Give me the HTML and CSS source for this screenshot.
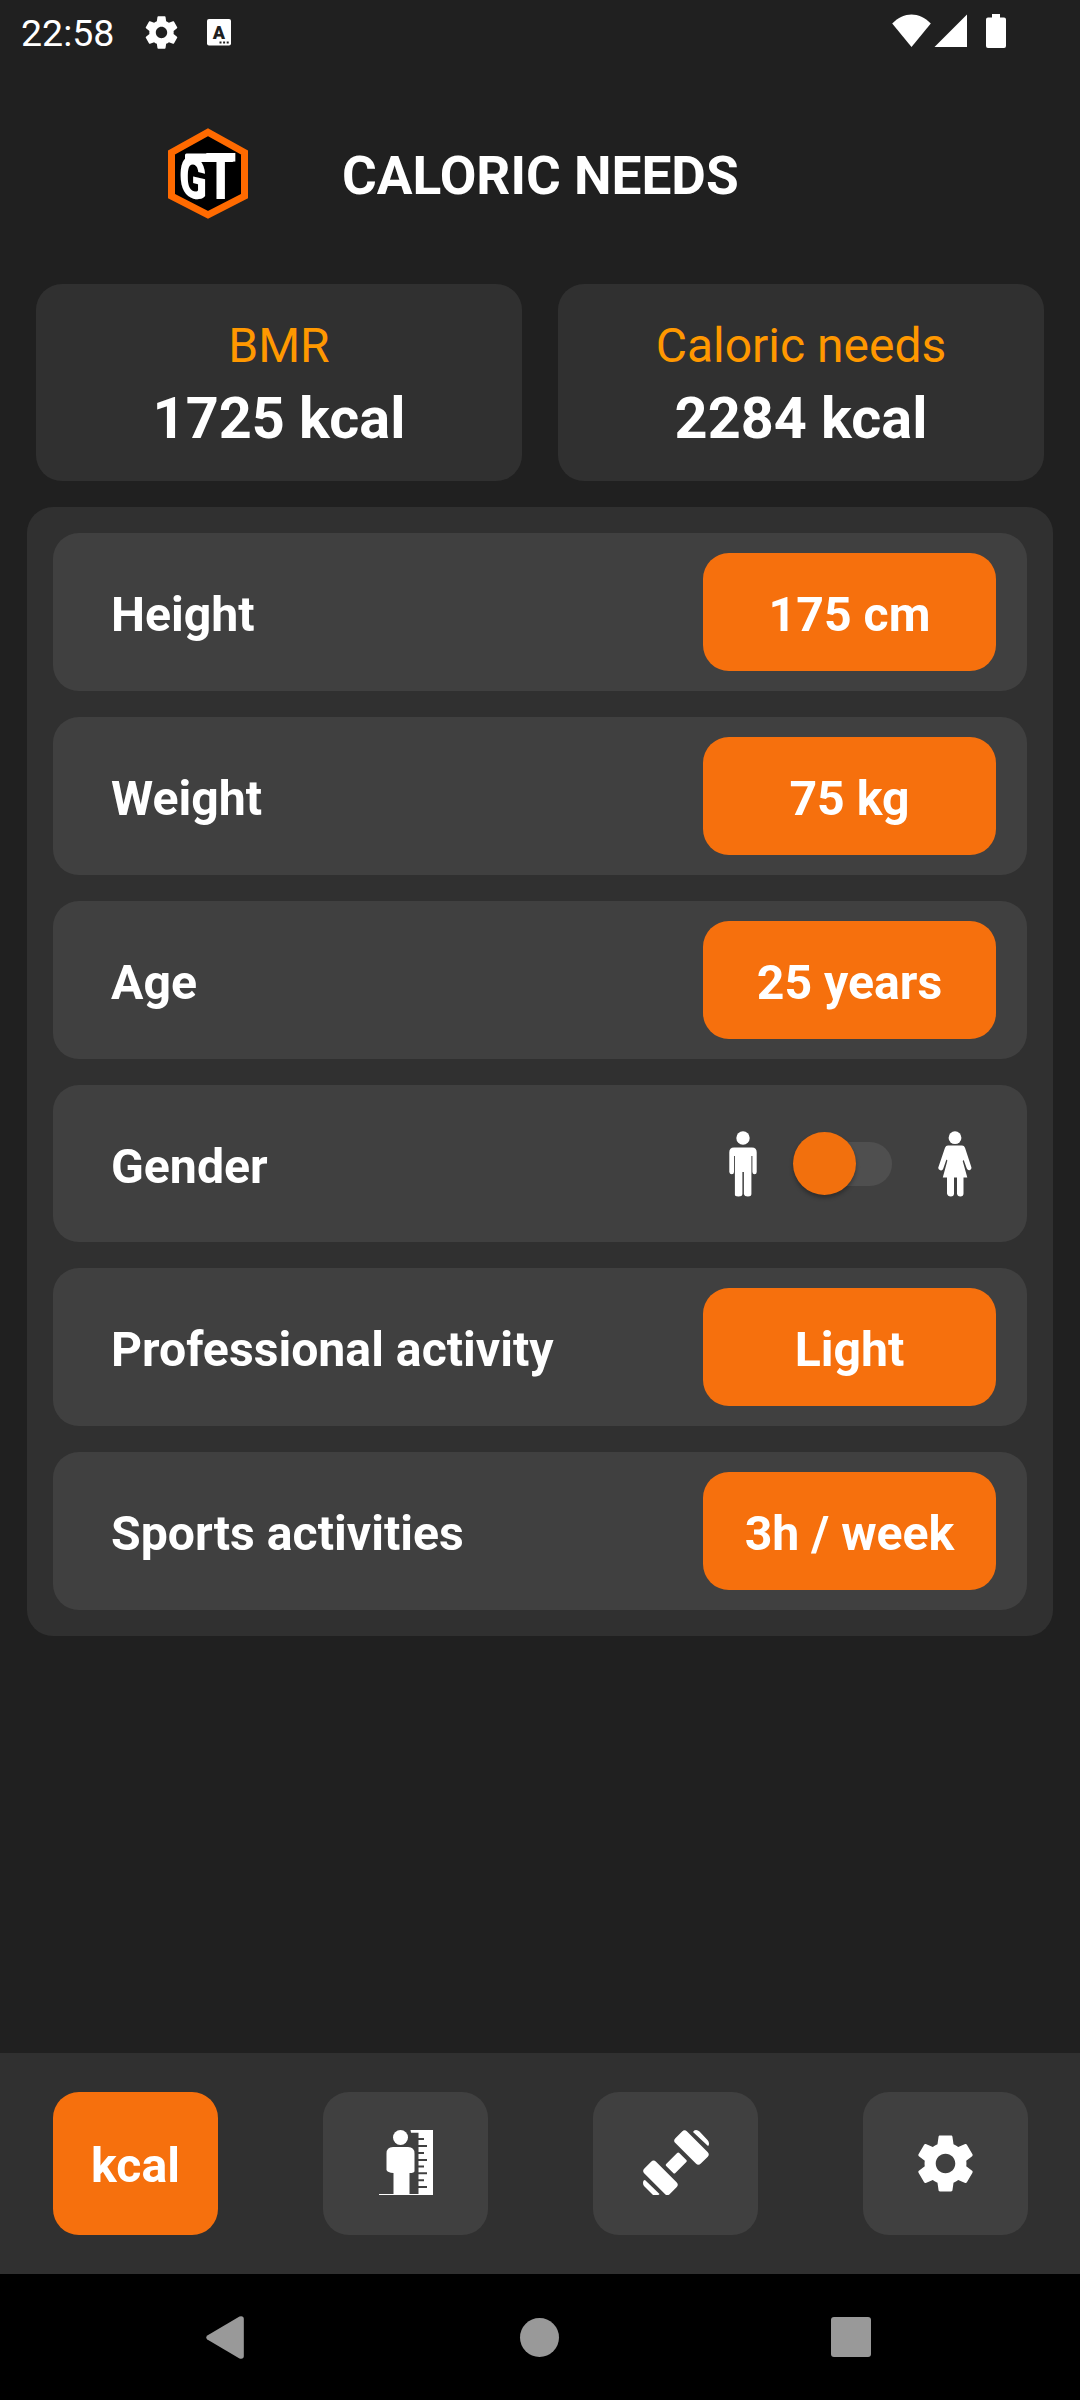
FILE: index.html
```html
<!DOCTYPE html>
<html lang="en">

<head>
    <meta charset="UTF-8">
    <meta name="viewport" content="width=device-width, initial-scale=1">
    <title>Caloric Needs</title>
    <link rel="stylesheet" href="styles.css">
</head>

<body>
    <!-- gear is used twice, status bar and bottom menu -->
    <svg class="defs" width="0" height="0">
        <symbol id="gear" viewBox="0 0 24 24">
            <path d="M19.43 12.98c.04-.32.07-.64.07-.98s-.03-.66-.07-.98l2.11-1.65c.19-.15.24-.42.12-.64l-2-3.46c-.12-.22-.39-.3-.61-.22l-2.49 1c-.52-.4-1.08-.73-1.69-.98l-.38-2.65C14.46 2.18 14.25 2 14 2h-4c-.25 0-.46.18-.49.42l-.38 2.65c-.61.25-1.17.59-1.69.98l-2.49-1c-.23-.09-.49 0-.61.22l-2 3.46c-.13.22-.07.49.12.64l2.11 1.65c-.04.32-.07.65-.07.98s.03.66.07.98l-2.11 1.65c-.19.15-.24.42-.12.64l2 3.46c.12.22.39.3.61.22l2.49-1c.52.4 1.08.73 1.69.98l.38 2.65c.03.24.24.42.49.42h4c.25 0 .46-.18.49-.42l.38-2.65c.61-.25 1.17-.59 1.69-.98l2.49 1c.23.09.49 0 .61-.22l2-3.46c.12-.22.07-.49-.12-.64l-2.11-1.65zM12 15.5c-1.93 0-3.5-1.57-3.5-3.5s1.57-3.5 3.5-3.5 3.5 1.57 3.5 3.5-1.57 3.5-3.5 3.5z"/>
        </symbol>
    </svg>

    <div class="status-bar">
        <div class="status-left">
            <span class="clock">22:58</span>
            <svg class="status-gear" width="39" height="39"><use href="#gear"/></svg>
            <svg class="status-lang" width="24" height="27" viewBox="0 0 24 27">
                <rect width="24" height="26.5" rx="2"/>
                <text x="12" y="19.5">A</text>
                <path class="dots" d="M12.500 23.600h2m1.600 0h2m1.600 0h2"/>
            </svg>
        </div>
        <svg class="status-right" width="116" height="36" viewBox="0 0 116 36">
            <path d="M.2 9.500C12 -2.500 27 -2.500 38.800 9.500L19.500 33z"/>
            <path d="M75 .5V33H42.500z"/>
            <path d="M100 0h8v3.500h4q2 0 2 2V32q0 2-2 2H96q-2 0-2-2V5.500q0-2 2-2h4z"/>
        </svg>
    </div>

    <header class="header">
        <svg class="logo" width="80" height="91" viewBox="0 0 80 91">
            <path d="M40 4.200L76.500 24.500V68L40 86.800L3.500 68V24.500z"/>
            <rect x="17" y="25.500" width="48.500" height="8.500" rx="1.500"/>
            <text class="logo-g" transform="translate(11 66.500) skewY(14) scale(.72 1)">G</text>
            <text class="logo-t" transform="translate(37.500 71) scale(.76 1)">T</text>
        </svg>
        <h1>CALORIC NEEDS</h1>
    </header>

    <main>
        <div class="results">
            <div class="result-card">
                <span class="result-label">BMR</span>
                <span class="result-value">1725 kcal</span>
            </div>
            <div class="result-card">
                <span class="result-label">Caloric needs</span>
                <span class="result-value">2284 kcal</span>
            </div>
        </div>

        <div class="panel">
            <div class="row">
                <span>Height</span>
                <button class="button">175 cm</button>
            </div>
            <div class="row">
                <span>Weight</span>
                <button class="button">75 kg</button>
            </div>
            <div class="row">
                <span>Age</span>
                <button class="button">25 years</button>
            </div>
            <div class="row gender-row">
                <span>Gender</span>
                <div class="gender">
                    <svg width="28" height="66" viewBox="0 0 28 66">
                        <circle cx="14" cy="7" r="6.700"/>
                        <path d="M5 16.500h18q4.700 0 4.700 4.700V41q0 2.300-2.100 2.300T23.400 41V25h-1V63q0 2.500-3.500 2.500T14.900 63V41h-1.500V63q0 2.500-4 2.500T5.900 63V25H5V41q0 2.300-2.200 2.300T.3 41V21.200Q.3 16.500 5 16.500z"/>
                    </svg>
                    <div class="switch"><div class="thumb"></div></div>
                    <svg width="34" height="66" viewBox="0 0 34 66">
                        <circle cx="17" cy="6.700" r="6.400"/>
                        <path d="M10 14.500h14q2.200 0 3 2.300L33.300 36q.6 2.300-1.400 3t-3.100-1.500L25.700 29l-1 1L29.300 46.500H25.500V62.500q0 3-3.100 3T19 62.500V46.500H16V62.500q0 3-3.200 3T9 62.500V46.500H4.800L9.400 29.500l-1-1L5.300 37.500Q4.500 40 2.200 39.300T.3 36.500L7 16.800q.8-2.300 3-2.300z"/>
                    </svg>
                </div>
            </div>
            <div class="row">
                <span>Professional activity</span>
                <button class="button">Light</button>
            </div>
            <div class="row">
                <span>Sports activities</span>
                <button class="button">3h / week</button>
            </div>
        </div>
    </main>

    <nav class="menu">
        <button class="menu-button active">kcal</button>
        <button class="menu-button">
            <svg class="menu-icon" width="65" height="65" viewBox="0 0 65 65">
                <circle cx="27.500" cy="7.500" r="7.500"/>
                <path d="M20 17h15q6.500 0 6.500 6.500V41q0 2-5 2V64h-16V43q-6-.5-7-3V23.500Q13.500 17 20 17z"/>
                <path d="M37.500 0H60V65H6v-1h39.500V58H54v-2h-8.500v-4.800H51v-2h-5.500v-4.900H54v-2h-8.500v-4.700H51v-2h-5.500V31H54v-2h-8.500v-5H51v-2h-5.500V17H54v-2h-8.500v-5H51V8h-5.500V2.700H38z"/>
            </svg>
        </button>
        <button class="menu-button">
            <svg class="menu-icon" width="66" height="65" viewBox="0 0 66 65">
                <rect x="30.500" y="9.300" width="36" height="16.500" rx="3.500" transform="rotate(45 48.500 17.500)"/>
                <rect x="-.5" y="39.600" width="36" height="16.500" rx="3.500" transform="rotate(45 17.500 47.800)"/>
                <rect x="24" y="26.500" width="18.500" height="13" rx="1.500" transform="rotate(-45 33.250 33)"/>
                <path d="M50 2q1-2 3-2 2 0 3.500 1.500L64.500 10q1.500 1.500 1.500 3.500T65 16z"/>
                <path d="M0 53q0-3 2-3L16.500 64q-.5 1-1.500 1H10L1.500 56.500Q0 55 0 53z"/>
            </svg>
        </button>
        <button class="menu-button">
            <svg class="menu-icon menu-gear" width="67" height="67"><use href="#gear"/></svg>
        </button>
    </nav>

    <div class="system-bar">
        <svg width="38" height="43" viewBox="0 0 38 43">
            <path d="M1.300 19.500L33.500 .5Q37.800 -.5 37.800 3V40Q37.800 43.500 33.500 42.500L1.300 23.500Q-.8 21.500 1.300 19.500z"/>
        </svg>
        <div class="home"></div>
        <div class="recent"></div>
    </div>
</body>

</html>
```
FILE: styles.css
```css
:root {
    --bg-color: #202020;
    --panel-color: #303030;
    --row-color: #404040;
    --text-color: #ffffff;
    --orange: #f6700d;
    --label-orange: #ff9800;
    --radius: 26px;
}

* {
    box-sizing: border-box;
}

body {
    margin: 0;
    height: 2400px;
    display: flex;
    flex-direction: column;
    background-color: var(--bg-color);
    color: var(--text-color);
    font-family: Roboto, sans-serif;
    fill: #ffffff;
}

svg {
    display: block;
    flex-shrink: 0;
}

.defs {
    position: absolute;
}

button {
    border: none;
    padding: 4px 0 0;
    font: inherit;
    color: inherit;
    fill: inherit;
    border-radius: var(--radius);
}

/* status bar */
.status-bar {
    height: 64px;
    display: flex;
    justify-content: space-between;
    padding: 0 72px 0 21px;
}

.status-left {
    display: flex;
    align-items: center;
}

.clock {
    width: 93px;
    padding-top: 3px;
    font-size: 37.5px;
    line-height: 43px;
}

.status-gear {
    margin-left: 27.5px;
}

.status-lang {
    margin-left: 26.5px;
}

.status-lang text {
    font-size: 18px;
    font-weight: 900;
    text-anchor: middle;
    fill: var(--bg-color);
}

.dots {
    stroke: var(--bg-color);
    stroke-width: 2;
}

.status-right {
    margin-top: 14px;
}

/* header */
.header {
    height: 220px;
    display: flex;
    align-items: flex-start;
    padding: 64px 0 0 168px;
}

.logo path {
    fill: #000000;
    stroke: #ff6a00;
    stroke-width: 7;
}

.logo text {
    font-weight: 900;
}

.logo-g {
    font-size: 57px;
}

.logo-t {
    font-size: 64px;
}

h1 {
    margin: 17px 0 0 94px;
    font-size: 53.2px;
    line-height: 62px;
    font-weight: 700;
    white-space: nowrap;
}

/* results */
.results {
    display: flex;
    gap: 36px;
    padding: 0 36px;
}

.result-card {
    flex: 1;
    height: 197px;
    padding-top: 31px;
    display: flex;
    flex-direction: column;
    align-items: center;
    background-color: var(--panel-color);
    border-radius: var(--radius);
}

.result-label {
    font-size: 48px;
    line-height: 62px;
    color: var(--label-orange);
}

.result-value {
    margin-top: 7px;
    font-size: 57.6px;
    line-height: 70px;
    font-weight: 700;
}

/* parameters */
.panel {
    margin: 26px 27px 0;
    padding: 26px;
    display: flex;
    flex-direction: column;
    gap: 26px;
    background-color: var(--panel-color);
    border-radius: var(--radius);
}

.row {
    height: 158px;
    padding: 0 31px 0 58px;
    display: flex;
    align-items: center;
    justify-content: space-between;
    background-color: var(--row-color);
    border-radius: var(--radius);
    font-size: 48.2px;
    font-weight: 700;
}

.row > span {
    padding-top: 4px;
}

.button {
    width: 293px;
    height: 118px;
    background-color: var(--orange);
}

.gender-row {
    height: 157px;
    padding-right: 55px;
}

.gender-row > span {
    padding-top: 6px;
}

.gender {
    display: flex;
    align-items: center;
}

.switch {
    position: relative;
    width: 92px;
    height: 44px;
    margin: 0 46px 0 43px;
    border-radius: 22px;
    background-color: #4f4f4f;
}

.thumb {
    position: absolute;
    left: -7px;
    top: -9.5px;
    width: 63px;
    height: 63px;
    border-radius: 50%;
    background-color: #f2700d;
    box-shadow: 0 3px 4px rgba(0, 0, 0, 0.3);
}

/* bottom menu */
.menu {
    margin-top: auto;
    height: 221px;
    padding: 39px 52px 0 53px;
    display: flex;
    justify-content: space-between;
    background-color: var(--panel-color);
}

.menu-button {
    width: 165px;
    height: 143px;
    padding: 0;
    display: flex;
    align-items: center;
    justify-content: center;
    background-color: var(--row-color);
    font-size: 48.2px;
    font-weight: 700;
}

.menu-button.active {
    padding-top: 4px;
    background-color: var(--orange);
}

.menu-icon {
    margin-bottom: 2px;
}

.menu-gear {
    margin-bottom: 0;
}

/* android navigation */
.system-bar {
    height: 126px;
    padding: 0 209px 0 206px;
    display: flex;
    align-items: center;
    justify-content: space-between;
    background-color: #000000;
    fill: #999999;
}

.home {
    width: 39px;
    height: 39px;
    margin-left: 4px;
    border-radius: 50%;
    background-color: #999999;
}

.recent {
    width: 40px;
    height: 40px;
    border-radius: 3px;
    background-color: #999999;
}
```
